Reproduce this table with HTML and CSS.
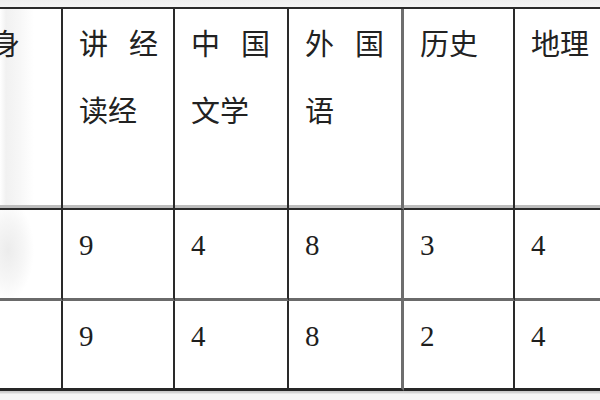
FILE: index.html
```html
<!DOCTYPE html>
<html lang="zh-CN">
<head>
<meta charset="utf-8">
<title>课程表</title>
<link rel="stylesheet" href="styles.css">
</head>
<body>
<div class="frame">
  <div class="sheet">
    <div class="cell head first"><div class="pair">修 身</div></div>
    <div class="cell head"><div class="pair">讲 经</div><div>读经</div></div>
    <div class="cell head"><div class="pair">中 国</div><div>文学</div></div>
    <div class="cell head gray-r"><div class="pair">外 国</div><div>语</div></div>
    <div class="cell head"><div>历史</div></div>
    <div class="cell head last"><div>地理</div></div>

    <div class="cell num first mid"></div>
    <div class="cell num mid">9</div>
    <div class="cell num mid">4</div>
    <div class="cell num mid gray-r">8</div>
    <div class="cell num mid">3</div>
    <div class="cell num mid last">4</div>

    <div class="cell num first end"></div>
    <div class="cell num end">9</div>
    <div class="cell num end">4</div>
    <div class="cell num end gray-r">8</div>
    <div class="cell num end">2</div>
    <div class="cell num end last">4</div>
  </div>
</div>
</body>
</html>
```
FILE: styles.css
```css
html, body {
  margin: 0;
  padding: 0;
  background: #ffffff;
}

.frame {
  width: 600px;
  height: 400px;
  overflow: hidden;
  background: linear-gradient(to bottom, #eeeeee 0, #f4f4f4 7px, #ffffff 7px, #ffffff 391px, #c8c8c8 391px, #d8d8d8 393px, #f6f6f6 394px);
}

.sheet {
  margin-top: 7px;
  margin-left: -76px;
  width: 716px;
  display: grid;
  grid-template-columns: 139px 112px 114px 115px 111px 125px;
  grid-template-rows: 201px 91px 90px;
  border-top: 2px solid #2a2a2a;
  font-family: "Noto Sans CJK SC", "Liberation Serif", serif;
  color: #222222;
}

.cell {
  box-sizing: border-box;
  border-right: 2px solid #2a2a2a;
  background: #ffffff;
}

.cell.gray-r {
  border-right: 3px solid #6e6e6e;
}

.cell.last {
  border-right: none;
}

.head {
  border-bottom: 2px solid #2a2a2a;
  box-shadow: inset 0 -3px 0 #bdbdbd;
  padding-left: 16px;
  font-size: 29px;
  line-height: 67px;
}

.head.first {
  padding-left: 17px;
  background: linear-gradient(to right, #ffffff 76px, #f1f1f1 82px, #f7f7f7 96px, #ffffff 110px);
}

.pair {
  width: 79px;
  text-align: justify;
  text-align-last: justify;
}

.num {
  padding: 15px 0 0 16px;
  font-family: "Liberation Serif", serif;
  font-size: 29px;
  line-height: 40px;
  color: #1e1e1e;
}

.num.mid {
  border-bottom: 3px solid #6a6a6a;
}

.num.end {
  border-bottom: 3px solid #262626;
}

.num.first.mid {
  background: radial-gradient(ellipse 26px 50px at 84px 40px, #ececec 0%, #f6f6f6 60%, #ffffff 100%);
}
```
